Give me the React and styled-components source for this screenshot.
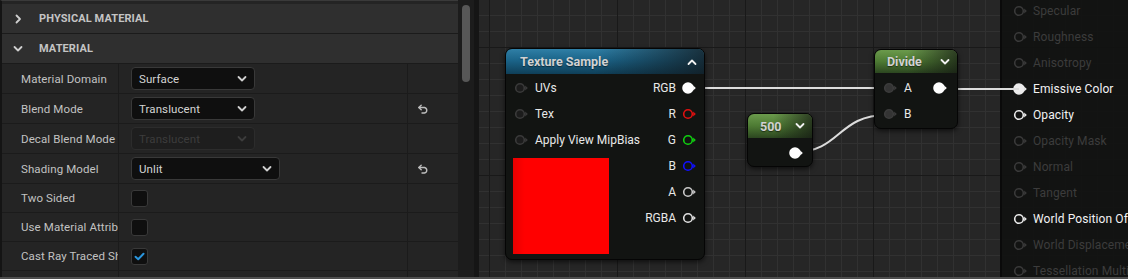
import React from 'react';
import styled, { createGlobalStyle, css } from 'styled-components';

const GlobalStyle = createGlobalStyle`
  html, body { margin: 0; padding: 0; background: #1a1a1a; }
  body { font-family: Roboto, "Liberation Sans", sans-serif; }
  * { box-sizing: border-box; }
`;

const properties = [
  { name: 'Material Domain', kind: 'combo', value: 'Surface', w: 124 },
  { name: 'Blend Mode', kind: 'combo', value: 'Translucent', w: 124, reset: true },
  { name: 'Decal Blend Mode', kind: 'combo', value: 'Translucent', w: 124, disabled: true },
  { name: 'Shading Model', kind: 'combo', value: 'Unlit', w: 149, reset: true },
  { name: 'Two Sided', kind: 'check' },
  { name: 'Use Material Attributes', kind: 'check' },
  { name: 'Cast Ray Traced Shadows', kind: 'check', checked: true },
  { name: '', kind: 'empty' },
];

const outputs = [
  { label: 'RGB', color: '#ffffff', filled: true },
  { label: 'R', color: '#e01010' },
  { label: 'G', color: '#10d010' },
  { label: 'B', color: '#1010ff' },
  { label: 'A', color: '#c8c8c8' },
  { label: 'RGBA', color: '#e0e0e0' },
];

const resultPins = [
  { label: 'Specular' },
  { label: 'Roughness' },
  { label: 'Anisotropy' },
  { label: 'Emissive Color', active: true, filled: true },
  { label: 'Opacity', active: true },
  { label: 'Opacity Mask' },
  { label: 'Normal' },
  { label: 'Tangent' },
  { label: 'World Position Offset', active: true },
  { label: 'World Displacement' },
  { label: 'Tessellation Multiplier' },
];

const Chevron = ({ dir = 'down', color = '#cfcfcf', size = 10 }) => {
  const d = {
    down: 'M1.5 3 L5 6.5 L8.5 3',
    up: 'M1.5 7 L5 3.5 L8.5 7',
    right: 'M3.5 1.5 L7 5 L3.5 8.5',
  }[dir];
  return (
    <svg width={size} height={size} viewBox="0 0 10 10">
      <path d={d} fill="none" stroke={color} strokeWidth="1.8" strokeLinecap="round" strokeLinejoin="round" />
    </svg>
  );
};

const ResetIcon = () => (
  <svg width="12" height="10" viewBox="0 0 12 10">
    <path d="M2 3.5 H7.5 A2.8 2.8 0 0 1 7.5 9 H5" fill="none" stroke="#bdbdbd" strokeWidth="1.4" strokeLinecap="round" />
    <path d="M4.2 1.2 L1.8 3.5 L4.2 5.8" fill="none" stroke="#bdbdbd" strokeWidth="1.4" strokeLinecap="round" strokeLinejoin="round" />
  </svg>
);

const Pin = ({ color = '#e8e8e8', filled, fill }) => (
  <svg width="15" height="12" viewBox="0 0 15 12">
    <circle
      cx="6"
      cy="6"
      r={filled ? 5 : 4.3}
      fill={filled ? color : fill || 'none'}
      stroke={color}
      strokeWidth="1.6"
    />
    <polygon points="11.2,3.6 13.8,6 11.2,8.4" fill={color} />
  </svg>
);

const InputPin = ({ tone = 'idle' }) =>
  tone === 'idle' ? <Pin color="#3a3a3a" fill="#1c1c1c" /> : <Pin color="#3c3c3c" fill="#343434" />;

export default function App() {
  return (
    <>
      <GlobalStyle />
      <Frame>
        <Workspace>
          <Details>
            <CategoryHeader>
              <Chevron dir="right" />
              <span>Physical Material</span>
            </CategoryHeader>
            <CategoryHeader>
              <Chevron dir="down" />
              <span>Material</span>
            </CategoryHeader>
            {properties.map((p, i) => (
              <PropRow key={i} $h={p.kind === 'combo' ? 30 : 29}>
                <NameCell>{p.name}</NameCell>
                <ValueCell>
                  {p.kind === 'combo' && (
                    <Combo $w={p.w} $disabled={p.disabled}>
                      <span>{p.value}</span>
                      <Chevron dir="down" color={p.disabled ? '#3c3c3c' : '#d0d0d0'} />
                    </Combo>
                  )}
                  {p.kind === 'check' && (
                    <Check>
                      {p.checked && (
                        <svg width="11" height="9" viewBox="0 0 11 9">
                          <path d="M1.5 4.8 L4.2 7.2 L9.5 1.8" fill="none" stroke="#2a95dc" strokeWidth="2" strokeLinecap="round" strokeLinejoin="round" />
                        </svg>
                      )}
                    </Check>
                  )}
                </ValueCell>
                <ResetCell>{p.reset && <ResetIcon />}</ResetCell>
              </PropRow>
            ))}
          </Details>
          <ScrollTrack>
            <Thumb />
          </ScrollTrack>
          <Splitter />
          <Graph>
            <ResultPanel>
              {resultPins.map((r) => (
                <ResultRow key={r.label} $active={r.active}>
                  <Pin color={r.active ? '#ececec' : '#3a3a3a'} filled={r.filled} />
                  <span>{r.label}</span>
                </ResultRow>
              ))}
            </ResultPanel>

            <Wires width="649" height="277" viewBox="0 0 649 277">
              <path d="M210 88 L410 88" />
              <path d="M460 89 L540 89" />
              <path d="M316 152 C 362 152, 358 115, 408 115" />
            </Wires>

            <Node $x={26} $y={48} $w={200} $h={212}>
              <NodeHeader $tone="blue" $h={25} $pad={14}>
                <span>Texture Sample</span>
                <Chevron dir="up" color="#f0f0f0" />
              </NodeHeader>
              <TextureBody>
                <Column>
                  {['UVs', 'Tex', 'Apply View MipBias'].map((l) => (
                    <InRow key={l}>
                      <InputPin />
                      <span>{l}</span>
                    </InRow>
                  ))}
                  <Preview />
                </Column>
                <Column>
                  {outputs.map((o) => (
                    <OutRow key={o.label}>
                      <span>{o.label}</span>
                      <Pin color={o.color} filled={o.filled} />
                    </OutRow>
                  ))}
                </Column>
              </TextureBody>
            </Node>

            <Node $x={268} $y={113} $w={66} $h={54}>
              <NodeHeader $tone="green" $h={24} $pad={12}>
                <span>500</span>
                <Chevron dir="down" color="#f0f0f0" />
              </NodeHeader>
              <ConstBody>
                <Pin color="#ffffff" filled />
              </ConstBody>
            </Node>

            <Node $x={395} $y={49} $w={84} $h={80}>
              <NodeHeader $tone="green" $h={23} $pad={12}>
                <span>Divide</span>
                <Chevron dir="down" color="#f0f0f0" />
              </NodeHeader>
              <DivideBody>
                <InRow>
                  <InputPin tone="linked" />
                  <span>A</span>
                  <Spacer />
                  <Pin color="#ffffff" filled />
                </InRow>
                <InRow>
                  <InputPin tone="linked" />
                  <span>B</span>
                </InRow>
              </DivideBody>
            </Node>
          </Graph>
        </Workspace>
        <BottomEdge />
      </Frame>
    </>
  );
}

const Frame = styled.div`
  width: 1128px;
  height: 279px;
  display: flex;
  flex-direction: column;
  overflow: hidden;
  background: #1a1a1a;
`;

const Workspace = styled.div`
  display: flex;
  height: 277px;
`;

const BottomEdge = styled.div`
  height: 2px;
  background: #4e4e4e;
`;

const Details = styled.div`
  width: 458px;
  flex-shrink: 0;
  border-left: 2px solid #141414;
  border-top: 1px solid #3a3a3a;
  padding-top: 3px;
  background: #242424;
  overflow: hidden;
`;

const CategoryHeader = styled.div`
  height: 30px;
  display: flex;
  align-items: center;
  gap: 16px;
  padding-left: 11px;
  background: #2f2f2f;
  border-bottom: 1px solid #1b1b1b;
  color: #c4c4c4;
  font-size: 11px;
  font-weight: 700;
  text-transform: uppercase;
  letter-spacing: 0.1px;

  svg {
    flex-shrink: 0;
  }
`;

const PropRow = styled.div`
  height: ${(p) => p.$h}px;
  display: grid;
  grid-template-columns: 117px 289px 1fr;
  border-bottom: 1px solid #1b1b1b;
  background: #242424;
`;

const NameCell = styled.div`
  display: flex;
  align-items: center;
  padding-left: 19px;
  border-right: 1px solid #1b1b1b;
  color: #c2c2c2;
  font-size: 11.5px;
  letter-spacing: 0.1px;
  white-space: nowrap;
  overflow: hidden;
`;

const ValueCell = styled.div`
  display: flex;
  align-items: center;
  padding-left: 12px;
  border-right: 1px solid #1b1b1b;
`;

const ResetCell = styled.div`
  display: flex;
  align-items: center;
  padding-left: 9px;
`;

const Combo = styled.div`
  width: ${(p) => p.$w}px;
  height: 23px;
  display: flex;
  align-items: center;
  justify-content: space-between;
  padding: 0 7px 0 7px;
  background: #0f0f0f;
  border: 1px solid #393939;
  border-radius: 4px;
  color: #d4d4d4;
  font-size: 11.5px;
  letter-spacing: 0.1px;

  ${(p) =>
    p.$disabled &&
    css`
      background: #1e1e1e;
      border-color: #2c2c2c;
      color: #3c3c3c;
    `}
`;

const Check = styled.div`
  width: 17px;
  height: 17px;
  display: flex;
  align-items: center;
  justify-content: center;
  background: #0f0f0f;
  border: 1px solid #393939;
  border-radius: 3px;
`;

const ScrollTrack = styled.div`
  width: 16px;
  flex-shrink: 0;
  background: #1c1c1c;
  padding: 5px 4px 0 4px;
`;

const Thumb = styled.div`
  height: 77px;
  border-radius: 4px;
  background: #575757;
`;

const Splitter = styled.div`
  width: 5px;
  flex-shrink: 0;
  background: #151515;
`;

const Graph = styled.div`
  position: relative;
  flex: 1;
  overflow: hidden;
  background-color: #262626;
  background-image: linear-gradient(to right, #191919 1px, transparent 1px),
    linear-gradient(to bottom, #191919 1px, transparent 1px),
    linear-gradient(to right, #313131 1px, transparent 1px),
    linear-gradient(to bottom, #313131 1px, transparent 1px);
  background-size: 128px 128px, 128px 128px, 16px 16px, 16px 16px;
  background-position: 10px 47px, 10px 47px, 10px 15px, 10px 15px;
`;

const Wires = styled.svg`
  position: absolute;
  left: 0;
  top: 0;
  z-index: 2;

  path {
    fill: none;
    stroke: #dcdcdc;
    stroke-width: 2;
  }
`;

const ResultPanel = styled.div`
  position: absolute;
  left: 521px;
  top: -2px;
  bottom: 0;
  width: 128px;
  z-index: 1;
  background: rgba(17, 18, 17, 0.9);
  border-left: 2px solid #0a0a0a;
  padding-left: 11px;
  overflow: hidden;
`;

const ResultRow = styled.div`
  height: 26px;
  display: flex;
  align-items: center;
  gap: 5px;
  white-space: nowrap;
  font-size: 12px;
  letter-spacing: 0.1px;
  color: ${(p) => (p.$active ? '#f2f2f2' : '#3c3c3c')};

  svg {
    flex-shrink: 0;
  }
`;

const Node = styled.div`
  position: absolute;
  left: ${(p) => p.$x}px;
  top: ${(p) => p.$y}px;
  width: ${(p) => p.$w}px;
  height: ${(p) => p.$h}px;
  z-index: 3;
  display: flex;
  flex-direction: column;
  background: #121412;
  border: 1px solid #050505;
  border-radius: 7px;
  box-shadow: 0 2px 5px rgba(0, 0, 0, 0.6);
  overflow: hidden;
`;

const tones = {
  blue: css`
    background: linear-gradient(to right, rgba(0, 0, 0, 0) 45%, rgba(18, 24, 28, 0.75) 100%),
      linear-gradient(to bottom, #2f7fa6 0%, #1b6489 45%, #0f3f58 100%);
  `,
  green: css`
    background: linear-gradient(to right, rgba(0, 0, 0, 0) 40%, rgba(20, 24, 18, 0.7) 100%),
      linear-gradient(to bottom, #6b9a4c 0%, #4d7a33 50%, #2c4620 100%);
  `,
};

const NodeHeader = styled.div`
  height: ${(p) => p.$h}px;
  flex-shrink: 0;
  display: flex;
  align-items: center;
  justify-content: space-between;
  padding: 0 7px 0 ${(p) => p.$pad}px;
  color: #d2d2d2;
  font-size: 12.5px;
  font-weight: 700;
  text-shadow: 0 1px 1px rgba(0, 0, 0, 0.5);
  ${(p) => tones[p.$tone]}
`;

const TextureBody = styled.div`
  display: flex;
  justify-content: space-between;
  padding: 1px 7px 0 7px;
`;

const Column = styled.div`
  display: flex;
  flex-direction: column;
`;

const InRow = styled.div`
  height: 26px;
  display: flex;
  align-items: center;
  gap: 6px;
  padding-left: 1px;
  color: #e8e8e8;
  font-size: 12px;
  white-space: nowrap;

  svg {
    flex-shrink: 0;
  }
`;

const OutRow = styled.div`
  height: 26px;
  display: flex;
  align-items: center;
  justify-content: flex-end;
  gap: 6px;
  color: #e8e8e8;
  font-size: 12px;
`;

const Preview = styled.div`
  width: 96px;
  height: 96px;
  margin-top: 5px;
  background: linear-gradient(to right, #e80000 0%, #ff0000 12%, #ff0000 100%);
`;

const ConstBody = styled.div`
  flex: 1;
  display: flex;
  align-items: center;
  justify-content: flex-end;
  padding: 2px 8px 0 0;
`;

const DivideBody = styled.div`
  display: flex;
  flex-direction: column;
  padding: 2px 9px 0 7px;
`;

const Spacer = styled.div`
  flex: 1;
`;
